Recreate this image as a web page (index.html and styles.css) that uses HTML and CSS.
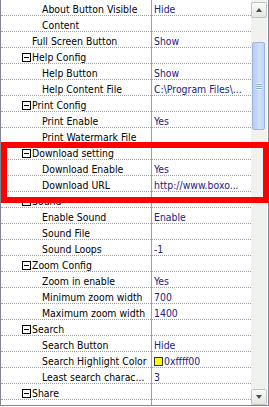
FILE: index.html
```html
<!DOCTYPE html>
<html lang="en">
<head>
	<meta charset="UTF-8">
	<title>Property Grid</title>
	<link rel="stylesheet" href="styles.css">
</head>

<body>

<div class="sheet">
	<div class="rows">
		<div class="row"><div class="name sub">About Button Visible</div><div class="value">Hide</div></div>
		<div class="row"><div class="name sub">Content</div><div class="value"></div></div>
		<div class="row"><div class="name mid">Full Screen Button</div><div class="value">Show</div></div>
		<div class="row"><div class="name cat"><span class="fold"></span>Help Config</div><div class="value"></div></div>
		<div class="row"><div class="name sub">Help Button</div><div class="value">Show</div></div>
		<div class="row"><div class="name sub">Help Content File</div><div class="value">C:\Program Files\...</div></div>
		<div class="row"><div class="name cat"><span class="fold"></span>Print Config</div><div class="value"></div></div>
		<div class="row"><div class="name sub">Print Enable</div><div class="value">Yes</div></div>
		<div class="row"><div class="name sub">Print Watermark File</div><div class="value"></div></div>
		<div class="row"><div class="name cat"><span class="fold"></span>Download setting</div><div class="value"></div></div>
		<div class="row"><div class="name sub">Download Enable</div><div class="value">Yes</div></div>
		<div class="row"><div class="name sub">Download URL</div><div class="value">http://www.boxo...</div></div>
		<div class="row"><div class="name cat"><span class="fold"></span>Sound</div><div class="value"></div></div>
		<div class="row"><div class="name sub">Enable Sound</div><div class="value">Enable</div></div>
		<div class="row"><div class="name sub">Sound File</div><div class="value"></div></div>
		<div class="row"><div class="name sub">Sound Loops</div><div class="value">-1</div></div>
		<div class="row"><div class="name cat"><span class="fold"></span>Zoom Config</div><div class="value"></div></div>
		<div class="row"><div class="name sub">Zoom in enable</div><div class="value">Yes</div></div>
		<div class="row"><div class="name sub">Minimum zoom width</div><div class="value">700</div></div>
		<div class="row"><div class="name sub">Maximum zoom width</div><div class="value">1400</div></div>
		<div class="row"><div class="name cat"><span class="fold"></span>Search</div><div class="value"></div></div>
		<div class="row"><div class="name sub">Search Button</div><div class="value">Hide</div></div>
		<div class="row"><div class="name sub">Search Highlight Color</div><div class="value"><span class="swatch"></span>0xffff00</div></div>
		<div class="row"><div class="name sub">Least search charac...</div><div class="value">3</div></div>
		<div class="row"><div class="name cat"><span class="fold"></span>Share</div><div class="value"></div></div>
	</div>

	<div class="scrollbar">
		<div class="btn"><span class="arrow up"></span></div>
		<div class="track">
			<div class="thumb"><span class="grip"></span></div>
		</div>
		<div class="btn"><span class="arrow down"></span></div>
	</div>

	<div class="mark"></div>
</div>

</body>
</html>
```

FILE: styles.css
```css
:root {
	--line: #a0a0a0;
	--value: #1a2180;
}

body {
	margin: 0;
	background: #fff;
	font-family: "DejaVu Sans Condensed", "Liberation Sans", sans-serif;
	font-size: 10.4px;
	color: #000;
}

.sheet {
	position: relative;
	display: flex;
	width: 269px;
	height: 406px;
	box-sizing: border-box;
	border-left: 1px solid #828790;
	border-right: 1px solid #828790;
	border-bottom: 1px solid #828790;
	padding-right: 1px;
	background: #fff;
}

/* grid rows */

.rows {
	flex: 1;
	overflow: hidden;
	background: linear-gradient(to right, transparent 150px, var(--line) 150px, var(--line) 151px, transparent 151px);
}

.row {
	display: flex;
	height: 16px;
	box-sizing: border-box;
	border-bottom: 1px dotted var(--line);
}

.name,
.value {
	padding-top: 4px;
	line-height: 11px;
	white-space: nowrap;
	overflow: hidden;
}

.name {
	width: 151px;
	flex: none;
	box-sizing: border-box;
}

.name.sub { padding-left: 41px; }
.name.mid { padding-left: 31px; }
.name.cat { padding-left: 21px; }

.fold {
	display: inline-block;
	width: 9px;
	height: 9px;
	box-sizing: border-box;
	margin-right: 1px;
	vertical-align: -1px;
	border: 1px solid #000;
	background: linear-gradient(#000, #000) center / 5px 1px no-repeat;
}

.value {
	flex: 1;
	padding-left: 2px;
	color: var(--value);
}

.swatch {
	display: inline-block;
	width: 9px;
	height: 9px;
	box-sizing: border-box;
	margin-right: 1px;
	vertical-align: -1px;
	border: 1px solid #333;
	background: #ffff00;
}

/* scrollbar */

.scrollbar {
	width: 16px;
	flex: none;
	display: flex;
	flex-direction: column;
	padding-top: 2px;
	background: #f1f1ed;
}

.btn {
	height: 16px;
	flex: none;
	box-sizing: border-box;
	display: flex;
	align-items: center;
	justify-content: center;
	border: 1px solid #c3c3c3;
	border-radius: 2px;
	background: linear-gradient(#fbfbfb, #e4e4e0);
}

.arrow {
	width: 0;
	height: 0;
	border-left: 3px solid transparent;
	border-right: 3px solid transparent;
}

.arrow.up { border-bottom: 4px solid #4d4d4d; }
.arrow.down { border-top: 4px solid #4d4d4d; }

.track {
	flex: 1;
}

.thumb {
	height: 88px;
	margin: 24px 2px 0 1px;
	box-sizing: border-box;
	display: flex;
	align-items: center;
	justify-content: center;
	border: 1px solid #9cb7e4;
	border-radius: 2px;
	background: linear-gradient(to right, #b4cdf4, #cfe0fb 60%, #c2d6f8);
}

.grip {
	width: 6px;
	height: 7px;
	background: repeating-linear-gradient(#eef4fe 0 1px, #8ca9d8 1px 2px);
}

/* annotation */

.mark {
	position: absolute;
	left: 0;
	top: 142px;
	width: 268px;
	height: 61px;
	box-sizing: border-box;
	border: 6px solid #ff0000;
}
```
